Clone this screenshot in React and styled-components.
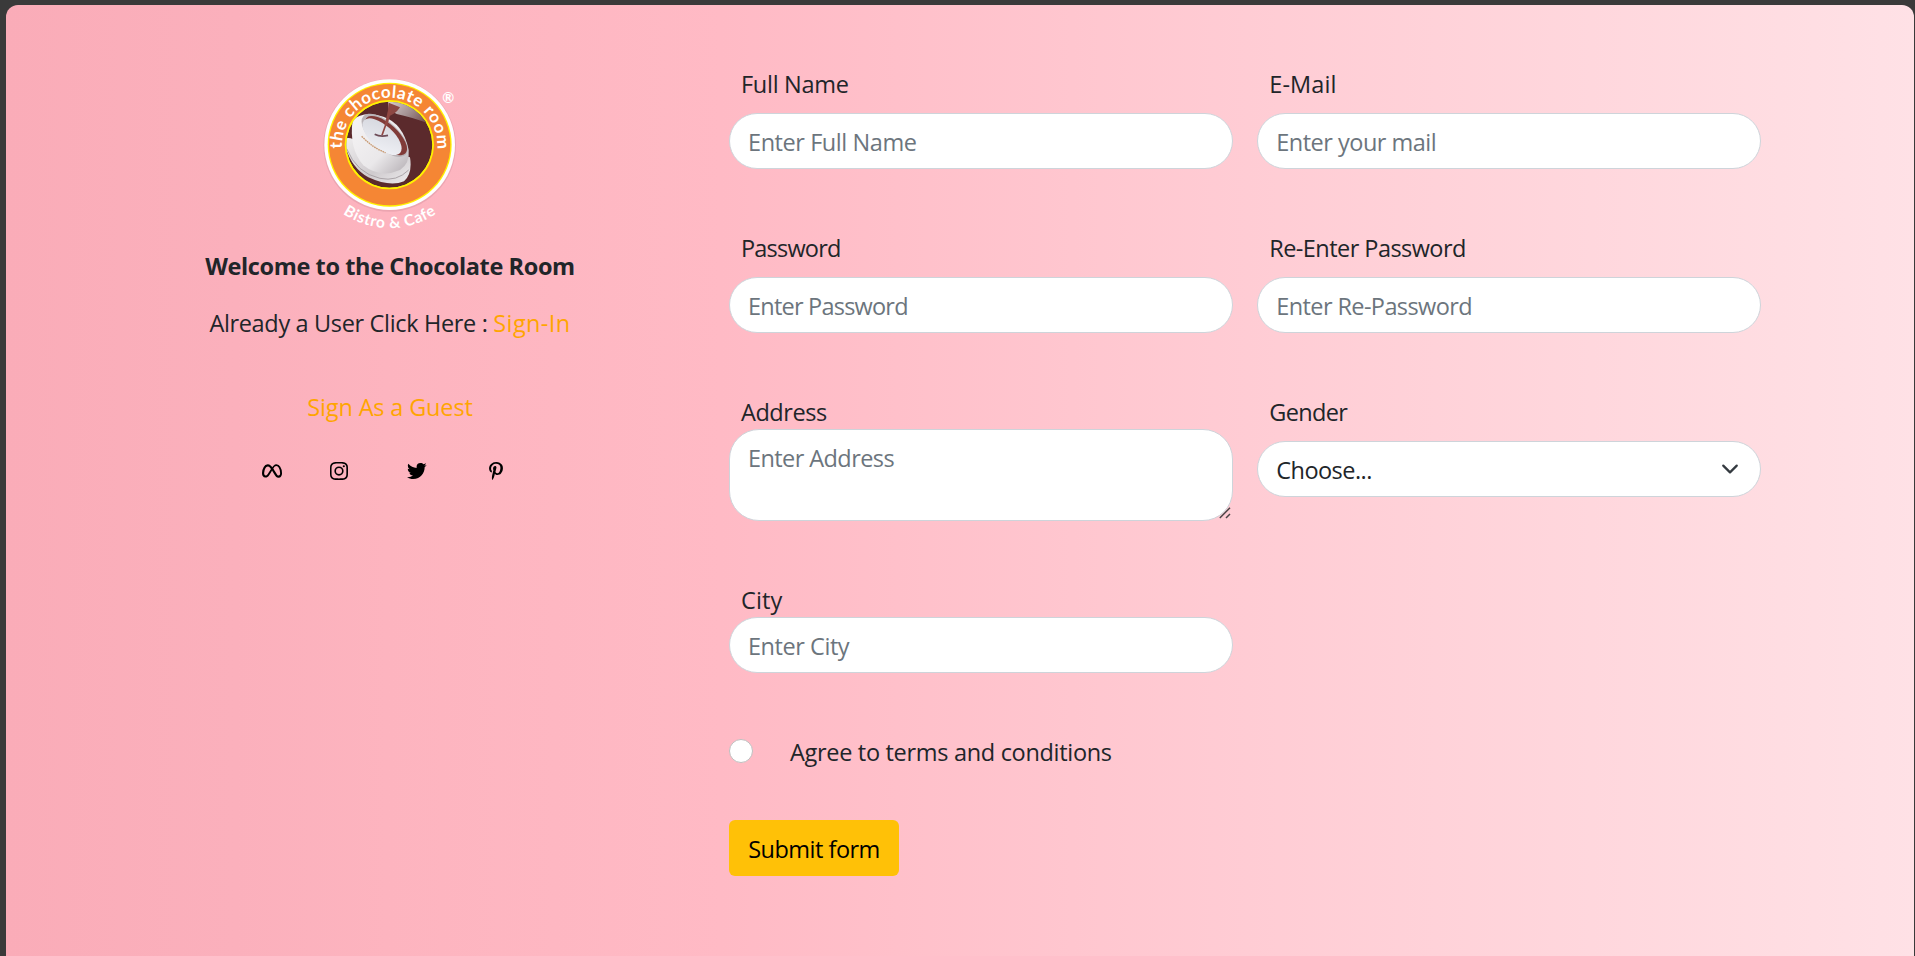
import React from "react";
import styled, { createGlobalStyle } from "styled-components";
import {
  BiLogoMeta,
  BiLogoInstagram,
  BiLogoTwitter,
  BiLogoPinterestAlt,
} from "react-icons/bi";

const GlobalStyle = createGlobalStyle`
  *, *::before, *::after { box-sizing: border-box; }
  body {
    margin: 0;
    height: 956px;
    overflow: hidden;
    background: #3a3a3a;
    color: #212529;
    font-family: "Segoe UI", "Open Sans", "Noto Sans", sans-serif;
    font-size: 23.5px;
    line-height: 36px;
  }
`;

const Page = styled.main`
  display: flex;
  margin: 5px 1px 0 6px;
  height: 971px;
  padding-left: 45px;
  border-radius: 12px;
  background: linear-gradient(
    90deg,
    #faacb8 0%,
    #fbb0bc 12%,
    #fdb4bf 20%,
    #ffbac5 37.5%,
    #ffccd4 65%,
    #ffdde2 93%,
    #ffe1e6 100%
  );
`;

const Intro = styled.section`
  display: flex;
  flex-direction: column;
  align-items: center;
  width: 678px;
  padding-top: 65px;
`;

const Logo = styled.svg`
  display: block;
  width: 180px;
  height: 165px;
`;

const Heading = styled.h1`
  margin: 13px 0 0;
  font-size: inherit;
  font-weight: 700;
  letter-spacing: -0.39px;
`;

const Line = styled.p`
  margin: ${(p) => p.$top}px 0 0;
  letter-spacing: -0.34px;
`;

const TextLink = styled.a`
  color: #ffa500;
  text-decoration: none;
  letter-spacing: ${(p) => p.$spacing}px;
`;

const SocialRow = styled.nav`
  display: flex;
  width: 260px;
  margin-top: 34px;
`;

const SocialLink = styled.a`
  display: flex;
  margin-left: ${(p) => p.$gap}px;
  color: #000;
  font-size: 24px;
`;

const Form = styled.form`
  display: flex;
  flex-direction: column;
  align-items: flex-start;
  width: 1032px;
  padding-top: 60px;
`;

const Fields = styled.div`
  display: grid;
  grid-template-columns: 1fr 1fr;
  align-items: start;
  gap: 60px 24.5px;
  width: 100%;
`;

const Field = styled.div`
  display: flex;
  flex-direction: column;
  gap: ${(p) => (p.$tight ? 0 : 12)}px;
`;

const Label = styled.label`
  margin-bottom: -1px;
  padding: 1px 0 0 12px;
  letter-spacing: ${(p) => p.$spacing}px;
`;

const Input = styled.input`
  display: block;
  width: 100%;
  height: 56px;
  margin: 0;
  padding: 10px 18px 8px;
  border: 1px solid #ced4da;
  border-radius: 30px;
  outline: none;
  background: #fff;
  color: #212529;
  font: inherit;
  letter-spacing: ${(p) => p.$spacing}px;

  &::placeholder {
    color: #6c757d;
    opacity: 1;
  }
`;

const Overlay = styled.div`
  display: grid;

  > * { grid-area: 1 / 1; }
`;

const TextArea = styled(Input)`
  height: 92px;
  resize: none;
`;

const Grip = styled.svg`
  place-self: end;
  width: 12px;
  height: 12px;
  margin: 0 2px 2px 0;
  pointer-events: none;
`;

const Select = styled(Input)`
  appearance: none;
`;

const Chevron = styled.svg`
  place-self: center end;
  width: 18px;
  height: 18px;
  margin: 0 22px 0 0;
  pointer-events: none;
`;

const Terms = styled.label`
  display: flex;
  align-items: center;
  gap: 37px;
  margin-top: 60px;
  letter-spacing: -0.31px;
`;

const TermsText = styled.span`
  margin-bottom: -1px;
  padding-top: 1px;
`;

const Radio = styled.input`
  appearance: none;
  width: 24px;
  height: 24px;
  margin: 0;
  border: 1px solid #bfbfbf;
  border-radius: 50%;
  background: #fff;
`;

const Submit = styled.button`
  width: 170px;
  height: 56px;
  margin-top: 51px;
  padding: 2px 0 0;
  border: 0;
  border-radius: 6px;
  background: #ffc107;
  color: #000;
  font: inherit;
  letter-spacing: -0.5px;
`;

const socials = [
  { name: "Meta", Icon: BiLogoMeta, gap: 0 },
  { name: "Instagram", Icon: BiLogoInstagram, gap: 43 },
  { name: "Twitter", Icon: BiLogoTwitter, gap: 54 },
  { name: "Pinterest", Icon: BiLogoPinterestAlt, gap: 55 },
];

function BrandLogo() {
  return (
    <Logo viewBox="0 0 180 165">
      <defs>
        <clipPath id="disc"><circle cx="268" cy="224" r="129" /></clipPath>
        <linearGradient id="china" x1="0" y1="0" x2="1" y2="1">
          <stop offset="0" stopColor="#f6f4f5" />
          <stop offset="0.6" stopColor="#eae8ea" />
          <stop offset="1" stopColor="#b3adb2" />
        </linearGradient>
        <linearGradient id="plate" x1="0" y1="0" x2="1" y2="1">
          <stop offset="0" stopColor="#efedee" />
          <stop offset="0.6" stopColor="#cfcbce" />
          <stop offset="1" stopColor="#eeecee" />
        </linearGradient>
        <linearGradient id="milk" x1="0" y1="0" x2="1" y2="1">
          <stop offset="0" stopColor="#d3d5dc" />
          <stop offset="1" stopColor="#f2f3f8" />
        </linearGradient>
        <linearGradient id="jug" x1="0" y1="0" x2="1" y2="0.5">
          <stop offset="0" stopColor="#d9cfd0" />
          <stop offset="0.55" stopColor="#a49192" />
          <stop offset="1" stopColor="#74504f" />
        </linearGradient>
        <path id="upperArc" d="M42.3 78.3 A47.5 47.5 0 1 1 137.1 78.3" />
        <path id="lowerArc" d="M43 143.6 A83 83 0 0 0 136.5 143.6" />
      </defs>
      <g transform="scale(0.33333)">
        <circle cx="269" cy="226" r="199" fill="#a86a78" opacity="0.2" />
        <circle cx="269" cy="224" r="196" fill="#fff" />
        <circle cx="269" cy="224" r="186" fill="#fff200" />
        <circle cx="269" cy="224" r="182" fill="#f58634" />
        <circle cx="268" cy="224" r="134" fill="#fff200" />
        <g clipPath="url(#disc)">
          <circle cx="268" cy="224" r="129" fill="#5b2a2c" />
          <path d="M264 92 L345 92 L400 165 Q330 140 290 132 L266 118Z" fill="url(#jug)" />
          <path d="M266 98 L300 112 Q286 134 262 140Z" fill="#8c4743" />
          <path d="M132 208 Q150 196 176 220 L330 262 Q338 310 312 334 Q270 352 205 322 Q145 288 132 208Z" fill="url(#plate)" />
          <path d="M140 236 Q170 310 240 325 Q290 336 326 300" fill="none" stroke="#aaa4a8" strokeWidth="3" />
          <path d="M158 150 Q146 235 190 286 Q240 326 300 300 Q330 280 326 240 Q310 160 250 140 Q190 122 158 150Z" fill="url(#china)" />
          <ellipse cx="254" cy="196" rx="86" ry="40" transform="rotate(42 254 196)" fill="#b9b4b8" />
          <ellipse cx="258" cy="197" rx="79" ry="35" transform="rotate(42 258 197)" fill="#813b38" />
          <ellipse cx="246" cy="200" rx="73" ry="34" transform="rotate(42 246 200)" fill="url(#milk)" />
          <path d="M270 118 L258 165" stroke="#914742" strokeWidth="9" />
          <path d="M258 162 L246 196" stroke="#914742" strokeWidth="5" />
          <path d="M224 193 Q242 202 264 196" fill="none" stroke="#6e4c58" strokeWidth="5" />
          <path d="M185 199 Q220 235 257 248" fill="none" stroke="#c89a73" strokeWidth="4" strokeDasharray="5 2" />
        </g>
      </g>
      <text fill="#fff" fontFamily="Lato, sans-serif" fontSize="17" fontWeight="700">
        <textPath href="#upperArc" textLength="156">the chocolate room</textPath>
      </text>
      <text fill="#fff" fontFamily="Lato, sans-serif" fontSize="15.5" fontWeight="700">
        <textPath href="#lowerArc" textLength="99">Bistro &amp; Cafe</textPath>
      </text>
      <text x="148.3" y="32.9" fill="#fff" fontFamily="Lato, sans-serif" fontSize="14.5" fontWeight="700" textAnchor="middle">®</text>
    </Logo>
  );
}

function FormField({ id, label, labelSpacing, tight, children }) {
  return (
    <Field $tight={tight}>
      <Label htmlFor={id} $spacing={labelSpacing}>{label}</Label>
      {children}
    </Field>
  );
}

export default function App() {
  return (
    <>
      <GlobalStyle />
      <Page>
        <Intro>
          <BrandLogo />
          <Heading>Welcome to the Chocolate Room</Heading>
          <Line $top={21}>
            Already a User Click Here : <TextLink href="#" $spacing={0.4}>Sign-In</TextLink>
          </Line>
          <Line $top={48}>
            <TextLink href="#" $spacing={-0.16}>Sign As a Guest</TextLink>
          </Line>
          <SocialRow>
            {socials.map(({ name, Icon, gap }) => (
              <SocialLink key={name} href="#" aria-label={name} $gap={gap}>
                <Icon />
              </SocialLink>
            ))}
          </SocialRow>
        </Intro>

        <Form>
          <Fields>
            <FormField id="name" label="Full Name" labelSpacing={-0.28}>
              <Input id="name" type="text" placeholder="Enter Full Name" $spacing={-0.43} />
            </FormField>
            <FormField id="mail" label="E-Mail" labelSpacing={0.1}>
              <Input id="mail" type="text" placeholder="Enter your mail" $spacing={-0.5} />
            </FormField>
            <FormField id="password" label="Password" labelSpacing={-0.8}>
              <Input id="password" type="password" placeholder="Enter Password" $spacing={-0.78} />
            </FormField>
            <FormField id="confirm" label="Re-Enter Password" labelSpacing={-0.55}>
              <Input id="confirm" type="password" placeholder="Enter Re-Password" $spacing={-0.6} />
            </FormField>
            <FormField id="address" label="Address" labelSpacing={-0.45} tight>
              <Overlay>
                <TextArea as="textarea" id="address" placeholder="Enter Address" $spacing={-0.58} />
                <Grip viewBox="0 0 12 12">
                  <path d="M0.8 11 L11 0.8 M7 11 L11 7" fill="none" stroke="#4a4446" strokeWidth="1.5" />
                </Grip>
              </Overlay>
            </FormField>
            <FormField id="gender" label="Gender" labelSpacing={-0.65}>
              <Overlay>
                <Select as="select" id="gender" $spacing={-0.53}>
                  <option>Choose...</option>
                </Select>
                <Chevron viewBox="0 0 16 16">
                  <path d="M2 5l6 6 6-6" fill="none" stroke="#343a40" strokeWidth="2" strokeLinecap="round" strokeLinejoin="round" />
                </Chevron>
              </Overlay>
            </FormField>
            <FormField id="city" label="City" labelSpacing={0.1} tight>
              <Input id="city" type="text" placeholder="Enter City" $spacing={-0.45} />
            </FormField>
          </Fields>
          <Terms>
            <Radio type="radio" />
            <TermsText>Agree to terms and conditions</TermsText>
          </Terms>
          <Submit type="button">Submit form</Submit>
        </Form>
      </Page>
    </>
  );
}
